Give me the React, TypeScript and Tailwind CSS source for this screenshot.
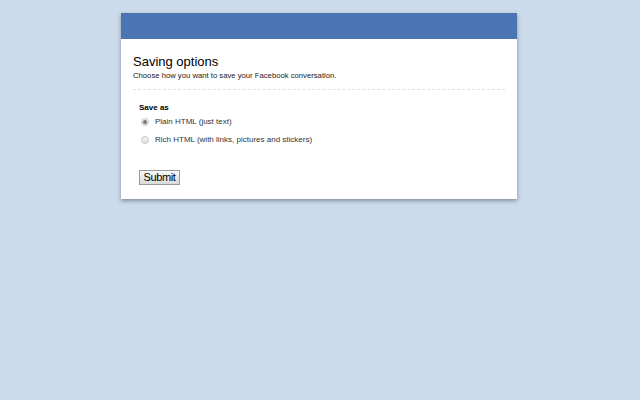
import React, { useState } from 'react';

const options = [
  { id: 'plain', label: 'Plain HTML (just text)' },
  { id: 'rich', label: 'Rich HTML (with links, pictures and stickers)' },
];

const App = () => {
  const [choice, setChoice] = useState('plain');

  return (
    <div className="min-h-[400px] w-full bg-[#cbdbec] pt-[13px]" style={{ fontFamily: '"Liberation Sans", Arial, sans-serif' }}>
      <div className="ml-[121px] w-[396px] bg-white shadow-[0_2px_4px_rgba(0,0,0,0.35)]">
        {/* Header bar */}
        <div className="h-[26px] bg-[#4a74b4]" />

        {/* Body */}
        <div className="px-[12px] pt-[15px] pb-[11px]">
          <h1 className="text-[13px] leading-[16px] text-black">Saving options</h1>
          <p className="text-[7.7px] leading-[11px] text-[#222]">
            Choose how you want to save your Facebook conversation.
          </p>
          <div className="mt-[8px] border-t border-dashed border-[#e2e2e2]" />

          <div className="pl-[6px] pt-[12px]">
            <div className="text-[8px] font-bold leading-[11px] text-black">Save as</div>
            <div className="mt-[3px] flex flex-col gap-[6px]">
              {options.map((opt) => (
                <label key={opt.id} className="flex items-center gap-[6px] pl-[2px] text-[8px] leading-[12px] text-[#333]">
                  <input
                    type="radio"
                    name="save"
                    checked={choice === opt.id}
                    onChange={() => setChoice(opt.id)}
                    className="hidden"
                  />
                  <span className="flex h-[8px] w-[8px] items-center justify-center rounded-full border border-[#c8c8c8] bg-gradient-to-b from-[#f4f4f4] to-[#e2e2e2]">
                    {choice === opt.id && <span className="h-[4px] w-[4px] rounded-full bg-[#777]" />}
                  </span>
                  {opt.label}
                </label>
              ))}
            </div>

            <button
              type="button"
              className="mt-[24px] h-[15px] w-[41px] border border-[#9a9a9a] bg-gradient-to-b from-[#f8f8f8] to-[#dadada] text-[11px] leading-[13px] tracking-[-0.4px] text-black"
            >
              Submit
            </button>
          </div>
        </div>
      </div>
    </div>
  );
};

export default App;
